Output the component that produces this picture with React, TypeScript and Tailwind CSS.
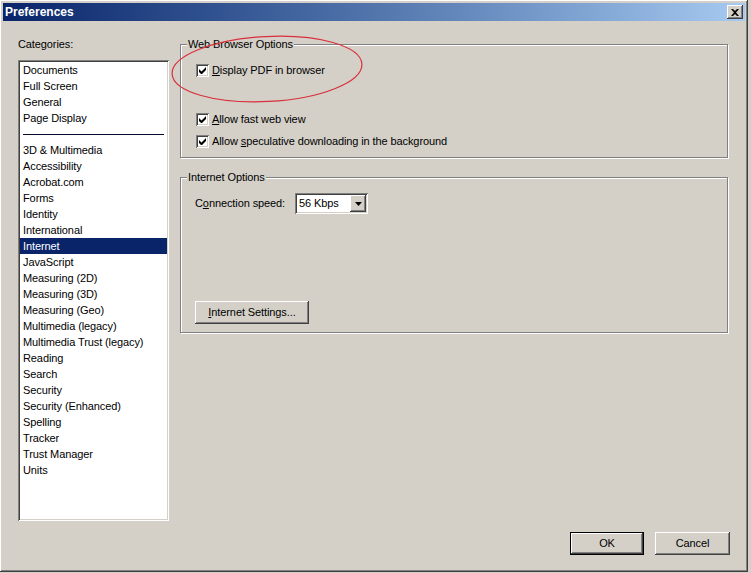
const categories = [
  'Documents',
  'Full Screen',
  'General',
  'Page Display',
  '-',
  '3D & Multimedia',
  'Accessibility',
  'Acrobat.com',
  'Forms',
  'Identity',
  'International',
  'Internet',
  'JavaScript',
  'Measuring (2D)',
  'Measuring (3D)',
  'Measuring (Geo)',
  'Multimedia (legacy)',
  'Multimedia Trust (legacy)',
  'Reading',
  'Search',
  'Security',
  'Security (Enhanced)',
  'Spelling',
  'Tracker',
  'Trust Manager',
  'Units',
];

const raised =
  'shadow-[inset_-1px_-1px_#404040,inset_1px_1px_#ffffff,inset_-2px_-2px_#808080,inset_2px_2px_#d4d0c8]';
const sunken =
  'shadow-[inset_1px_1px_#808080,inset_-1px_-1px_#ffffff,inset_2px_2px_#404040,inset_-2px_-2px_#d4d0c8]';
const etched = 'border border-[#808080] shadow-[1px_1px_0_#ffffff,inset_1px_1px_0_#ffffff]';

function Checkbox({ label }: { label: React.ReactNode }) {
  return (
    <div className="flex h-4 items-center">
      <div className={`flex h-[13px] w-[13px] items-center justify-center bg-white ${sunken}`}>
        <svg width="7" height="7" viewBox="0 0 7 7">
          <path d="M0 2v3l2 2h1l4-4V0L2.5 4.5z" fill="#000" />
        </svg>
      </div>
      <span className="ml-[3px]">{label}</span>
    </div>
  );
}

function Button({ children, isDefault = false, className = '' }: { children: React.ReactNode; isDefault?: boolean; className?: string }) {
  if (isDefault) {
    return (
      <div className={`border border-black ${className}`}>
        <div className={`flex h-full w-full items-center justify-center ${raised}`}>{children}</div>
      </div>
    );
  }
  return <div className={`flex items-center justify-center ${raised} ${className}`}>{children}</div>;
}

export default function App() {
  return (
    <div
      className="relative h-[573px] w-[751px] overflow-hidden bg-[#d4d0c8] text-[11px] leading-[13px] tracking-[-0.1px] text-black"
      style={{ fontFamily: '"Liberation Sans", Arial, sans-serif' }}
    >
      <div className={`flex h-[572px] w-[748px] flex-col p-[3px] ${raised}`}>
        {/* title bar */}
        <div className="flex h-[18px] items-center justify-between bg-linear-to-r from-[#0a246a] to-[#a6caf0] pl-[2px] pr-[2px]">
          <span className="text-[12px] font-bold tracking-normal text-white">Preferences</span>
          <div className={`flex h-[14px] w-4 items-center justify-center bg-[#d4d0c8] ${raised}`}>
            <svg width="8" height="7" viewBox="0 0 8 7">
              <path d="M0 0h2l2 2 2-2h2L5 3.5 8 7H6L4 5 2 7H0l3-3.5z" fill="#000" />
            </svg>
          </div>
        </div>

        <div className="flex flex-col pl-[15px] pt-[17px]">
          <div className="flex">
            {/* categories */}
            <div className="flex w-[151px] flex-col">
              <span>Categories:</span>
              <div className={`mt-[9px] h-[461px] bg-white p-[2px] ${sunken}`}>
                {categories.map((c) =>
                  c === '-' ? (
                    <div key="sep" className="flex h-4 items-center px-[3px]">
                      <div className="h-px w-[141px] bg-[#0a0a30]" />
                    </div>
                  ) : (
                    <div
                      key={c}
                      className={`flex h-4 items-center px-[3px] ${c === 'Internet' ? 'bg-[#0a246a] text-white' : ''}`}
                    >
                      {c}
                    </div>
                  ),
                )}
              </div>
            </div>

            {/* options */}
            <div className="ml-[11px] flex w-[548px] flex-col">
              <fieldset className={`h-[120px] ${etched}`}>
                <legend className="ml-[6px] bg-[#d4d0c8] px-[1px]">Web Browser Options</legend>
                <div className="flex flex-col pl-[15px]">
                  <div className="mt-[11px]">
                    <Checkbox label={<><span className="underline">D</span>isplay PDF in browser</>} />
                  </div>
                  <div className="mt-[33px]">
                    <Checkbox label={<><span className="underline">A</span>llow fast web view</>} />
                  </div>
                  <div className="mt-[6px]">
                    <Checkbox label={<>Allow <span className="underline">s</span>peculative downloading in the background</>} />
                  </div>
                </div>
              </fieldset>

              <fieldset className={`mt-[13px] h-[162px] ${etched}`}>
                <legend className="ml-[6px] bg-[#d4d0c8] px-[1px]">Internet Options</legend>
                <div className="flex flex-col pl-[14px]">
                  <div className="mt-[9px] flex items-center">
                    <span className="w-[100px]">
                      C<span className="underline">o</span>nnection speed:
                    </span>
                    <div className={`flex h-[21px] w-[73px] items-center justify-between bg-white p-[2px] ${sunken}`}>
                      <span className="pl-[2px]">56 Kbps</span>
                      <div className={`flex h-[17px] w-4 items-center justify-center bg-[#d4d0c8] ${raised}`}>
                        <svg width="7" height="4" viewBox="0 0 7 4">
                          <path d="M0 0h7L3.5 4z" fill="#000" />
                        </svg>
                      </div>
                    </div>
                  </div>
                  <Button className="mt-[87px] h-[23px] w-[114px]">
                    <span>
                      <span className="underline">I</span>nternet Settings...
                    </span>
                  </Button>
                </div>
              </fieldset>
            </div>
          </div>

          {/* dialog buttons */}
          <div className="mt-[11px] flex justify-end pr-[15px]">
            <Button isDefault className="h-[23px] w-[74px]">OK</Button>
            <Button className="ml-[11px] h-[23px] w-[75px]">Cancel</Button>
          </div>
        </div>
      </div>

      {/* red annotation ellipse */}
      <svg className="pointer-events-none absolute left-0 top-0" width="751" height="573">
        <ellipse
          cx="267"
          cy="69"
          rx="95"
          ry="32.5"
          fill="none"
          stroke="#d8303a"
          strokeWidth="1.2"
          transform="rotate(-3 267 69)"
        />
      </svg>
    </div>
  );
}
